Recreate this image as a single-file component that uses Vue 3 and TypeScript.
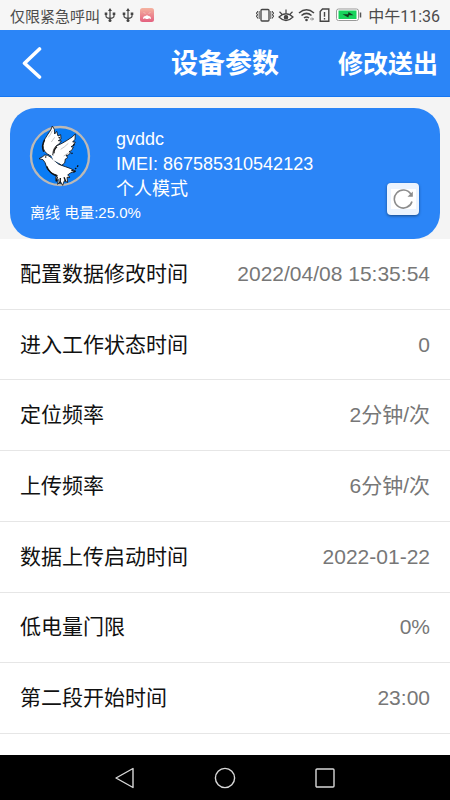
<script setup lang="ts">
import { ref } from 'vue'

interface Param {
  label: string
  value: string
}

const device = {
  name: 'gvddc',
  imei: '867585310542123',
  mode: '个人模式',
  status: '离线',
  battery: '25.0%',
}

const params = ref<Param[]>([
  { label: '配置数据修改时间', value: '2022/04/08 15:35:54' },
  { label: '进入工作状态时间', value: '0' },
  { label: '定位频率', value: '2分钟/次' },
  { label: '上传频率', value: '6分钟/次' },
  { label: '数据上传启动时间', value: '2022-01-22' },
  { label: '低电量门限', value: '0%' },
  { label: '第二段开始时间', value: '23:00' },
])
</script>

<template>
  <div class="screen">
    <div class="statusbar">
      <span class="carrier">仅限紧急呼叫</span>
      <svg v-for="n in 2" :key="n" class="usb" viewBox="0 0 12 16" width="12" height="16" aria-hidden="true">
        <path d="M6 3v10M2 7v2q0 2 4 2.500q4-.5 4-2.500V7" fill="none" stroke="#444" stroke-width="1.200" />
        <path d="M6 1l2 3H4zM.7 5.500h2.600v2.600H.7zM8.700 5.500h2.600v2.600H8.700z" fill="#444" />
        <circle cx="6" cy="13.500" r="1.500" fill="#444" />
      </svg>
      <svg class="app-mark" viewBox="0 0 14 14" width="14" height="14" aria-hidden="true">
        <defs>
          <linearGradient id="mark" x1="0" y1="0" x2="0" y2="1">
            <stop offset="0" stop-color="#f5b3a0" />
            <stop offset="1" stop-color="#e3607f" />
          </linearGradient>
        </defs>
        <rect width="14" height="14" rx="2.500" fill="url(#mark)" />
        <path d="M3 11q0-3 2.500-3Q7 6.500 8.500 8q2.500 0 2.500 3l-2-.8-1 .8H6l-1-.8z" fill="#fff" />
        <path d="M4 4.500l1 1M10 4.500l-1 1" stroke="#fbdcd8" />
      </svg>
      <div class="indicators">
        <svg viewBox="0 0 18 16" width="18" height="16" aria-hidden="true">
          <g fill="none" stroke="#444" stroke-width="1.300">
            <rect x="5" y="2.500" width="8" height="11.500" rx="1" />
            <path d="M1.500 4v1.500H.5V7h1v1.500h-1V10h1v1.500M3.200 4v8M16.500 4v1.500h1V7h-1v1.500h1V10h-1v1.500M14.800 4v8" stroke-width=".9" />
          </g>
        </svg>
        <svg viewBox="0 0 16 16" width="16" height="16" aria-hidden="true">
          <g fill="none" stroke="#444" stroke-width="1.200">
            <path d="M1 10Q8 3.500 15 10Q8 17 1 10zM8 6V2.500M3.800 7L1.500 4.800M12.200 7l2.300-2.200" />
            <circle cx="8" cy="10.200" r="1.700" fill="#444" />
          </g>
        </svg>
        <svg viewBox="0 0 17 16" width="17" height="16" aria-hidden="true">
          <path d="M1 6Q8.500-.5 16 6M3.500 8.500q5-4.300 10 0M6 11q2.500-2 5 0" fill="none" stroke="#444" stroke-width="1.500" />
          <circle cx="8.500" cy="13" r="1.300" fill="#444" />
          <path d="M12 12h3.500M14 10.500l1.500 1.500-1.500 1.500" fill="none" stroke="#888" />
        </svg>
        <svg viewBox="0 0 11 16" width="11" height="16" aria-hidden="true">
          <path d="M3.500 2H9.800v12.300H1.200V4.500zM5.500 5v4.700M5.500 11v1.500" fill="none" stroke="#444" stroke-width="1.400" />
        </svg>
        <svg class="battery" viewBox="0 0 26 14" width="26" height="14" aria-hidden="true">
          <rect x=".5" y="1" width="22" height="11.500" rx="2" fill="#fff" stroke="#999" />
          <rect x="2.500" y="2.500" width="18" height="8.500" fill="#16d35c" />
          <path d="M24.500 4.500v5" stroke="#555" stroke-width="1.500" />
          <path d="M6.500 6.200l5.500 0 .5-2.200 5 3.200h-4.500L12.300 9.500z" fill="#123c20" />
        </svg>
      </div>
      <time class="clock">中午11:36</time>
    </div>

    <header class="header">
      <button class="back" type="button" aria-label="返回">
        <svg viewBox="0 0 22 34" width="22" height="34" aria-hidden="true">
          <path d="M18.500 2L3.500 16.200l15 13.800" fill="none" stroke="#fff" stroke-width="3.600" stroke-linecap="round" stroke-linejoin="round" />
        </svg>
      </button>
      <h1>设备参数</h1>
      <button class="submit" type="button">修改送出</button>
    </header>

    <section class="summary">
      <div class="card">
        <div class="info">
          <div class="profile">
            <svg class="avatar" viewBox="30 24 180 180" width="60" height="60" aria-hidden="true">
              <circle cx="120" cy="114" r="87" fill="#0a7cf5" stroke="#bdb9b5" stroke-width="7" />
              <g fill="#fff" stroke="#111" stroke-width="2.500" stroke-linejoin="round">
                <path d="M94 114Q68 104 69 82Q72 62 84 48Q94 36 97 24l6 10 1 14 6-8 4 14 8-4 1 13-8 5 9 1-6 8-10 7-4 22z" />
                <path d="M99 121Q96 94 109 84Q128 76 143 66Q158 57 166 48l-1 16-7 8 8 0-7 11-6 3 7 2-6 10-7 3 5 3-8 8-6-1 5 8-7 4-2 12-9 7z" />
                <path d="M57 122l11-6Q73 108 83 112Q94 117 101 126Q115 142 136 146Q150 150 166 159l-15 6-8 6 7 7-9 0 2 15-10-5-5 14-7-12-8 9 2-15-7 6-1-12 5-6Q83 164 79 145Q76 132 69 125z" />
              </g>
              <path d="M84 106l10 7 6 14 24 12 8-8-22-14z" fill="#fff" />
              <path d="M71 101Q63 83 74 65M102 106Q101 94 111 86M80 145Q88 166 110 174M112 176l-3 14M121 180l-1 17M132 178l5 12" fill="none" stroke="#111" stroke-width="4" />
              <path d="M97 38Q92 50 85 58M145 76Q133 88 122 94M147 104l-16 10M104 58L94 72" fill="none" stroke="#888" stroke-width="1.500" />
              <circle cx="77" cy="117" r="2.500" fill="#111" />
              <path d="M154 158l7-1M165 153l4-3M172 147l2-5M160 163l7-4M116 58l4 3M163 78l-3 6M154 107l4-2" stroke="#111" stroke-width="4" />
            </svg>
            <div class="identity">
              <span>{{ device.name }}</span>
              <span>IMEI: {{ device.imei }}</span>
              <span>{{ device.mode }}</span>
            </div>
          </div>
          <p class="state">{{ device.status }} 电量:{{ device.battery }}</p>
        </div>
        <button class="refresh" type="button" aria-label="刷新">
          <svg viewBox="0 0 25 20" width="25" height="20" aria-hidden="true">
            <rect width="25" height="20" fill="#fff" />
            <path d="M19.800 5A9 9 0 1 0 21 12.500" fill="none" stroke="#8c8c8c" stroke-width="1.600" />
            <path d="M21.800 2.500v5.300h-5.300z" fill="#8c8c8c" />
          </svg>
        </button>
      </div>
    </section>

    <dl class="params">
      <div v-for="item in params" :key="item.label" class="row">
        <dt>{{ item.label }}</dt>
        <dd>{{ item.value }}</dd>
      </div>
    </dl>

    <nav class="navbar">
      <button type="button" aria-label="后退">
        <svg viewBox="0 0 22 22" width="22" height="22" aria-hidden="true">
          <path d="M2 11L19 1.500v19z" fill="none" stroke="#d8d8d8" stroke-width="1.400" stroke-linejoin="round" />
        </svg>
      </button>
      <button type="button" aria-label="主屏幕">
        <svg viewBox="0 0 22 22" width="22" height="22" aria-hidden="true">
          <circle cx="11" cy="11" r="9.600" fill="none" stroke="#d8d8d8" stroke-width="1.400" />
        </svg>
      </button>
      <button type="button" aria-label="最近任务">
        <svg viewBox="0 0 22 22" width="22" height="22" aria-hidden="true">
          <rect x="2" y="2" width="18" height="18" rx="1" fill="none" stroke="#d8d8d8" stroke-width="1.400" />
        </svg>
      </button>
    </nav>
  </div>
</template>

<style>
body {
  margin: 0;
}
</style>

<style scoped>
.screen {
  display: flex;
  flex-direction: column;
  min-height: 100vh;
  background: #fff;
  font-family: "Liberation Sans", "Noto Sans CJK SC", sans-serif;
}

button {
  display: flex;
  align-items: center;
  justify-content: center;
  padding: 0;
  border: 0;
  background: none;
  font-family: inherit;
  cursor: pointer;
}

svg {
  display: block;
  flex: none;
}

.statusbar {
  display: flex;
  align-items: center;
  gap: 6px;
  height: 30px;
  padding: 0 10px;
  background: #f6f6f6;
  color: #4c4c4c;
  font-family: Roboto, "Noto Sans CJK SC", sans-serif;
  font-size: 15px;
  white-space: nowrap;
}

.carrier {
  margin-right: -2px;
}

.indicators {
  display: flex;
  flex: 1;
  align-items: center;
  justify-content: flex-end;
  gap: 4px;
}

.battery {
  margin-left: 2px;
}

.clock {
  font-size: 16px;
}

.header {
  display: grid;
  grid-template-columns: 1fr auto 1fr;
  align-items: center;
  box-sizing: border-box;
  height: 67px;
  padding: 2px 12px 0;
  border-bottom: 1px solid #1677f2;
  background: #2b85f7;
  color: #fff;
}

.back {
  justify-self: start;
  padding: 0 9px;
}

h1 {
  margin: 0;
  font-size: 27px;
  line-height: 40px;
}

.submit {
  justify-self: end;
  color: #fff;
  font-size: 25px;
  font-weight: 700;
  line-height: 40px;
}

.summary {
  padding: 11px 10px 0;
  background: #f4f4f4;
}

.card {
  display: flex;
  align-items: flex-end;
  box-sizing: border-box;
  height: 131px;
  padding: 18px 21px 16px 20px;
  border-radius: 26px;
  background: #2b85f7;
  color: #fff;
}

.info {
  flex: 1;
}

.profile {
  display: flex;
  gap: 26px;
}

.avatar {
  overflow: visible;
}

.identity {
  display: flex;
  flex-direction: column;
  padding-top: 1px;
  font-size: 18px;
  line-height: 25px;
}

.state {
  margin: 0;
  font-size: 15px;
  line-height: 21px;
}

.refresh {
  width: 32px;
  height: 32px;
  margin-bottom: 8px;
  border-radius: 4px;
  background: #ebf3fe;
  box-shadow: 0 1px 3px rgb(0 0 0 / 45%);
}

.params {
  display: grid;
  flex: 1;
  grid-auto-rows: 1fr;
  margin: 0;
  padding-bottom: 21px;
  font-size: 21px;
  line-height: 30px;
}

.row {
  display: flex;
  align-items: center;
  justify-content: space-between;
  padding: 0 20px;
  border-bottom: 1px solid #e6e6e6;
}

dt {
  color: #111;
}

dd {
  margin: 0;
  color: #777;
}

.navbar {
  display: flex;
  align-items: center;
  justify-content: center;
  gap: 78px;
  height: 45px;
  background: #000;
}
</style>
